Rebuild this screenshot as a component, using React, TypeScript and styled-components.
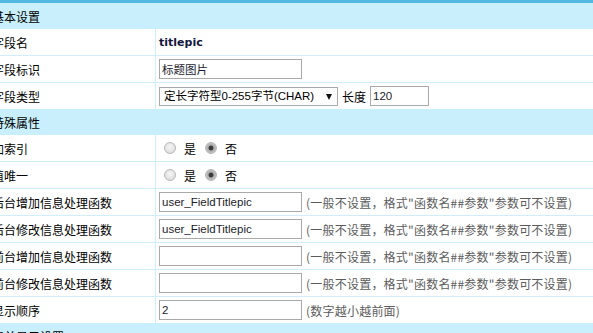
import React from 'react';
import styled, { createGlobalStyle } from 'styled-components';

const GlobalStyle = createGlobalStyle`
  html, body {
    margin: 0;
    padding: 0;
    background: #fff;
    overflow: hidden;
  }
  body {
    font-family: "Noto Sans CJK SC", "Liberation Sans", sans-serif;
    font-size: 12px;
    color: #000;
  }
`;

const Page = styled.div`
  margin-left: -13px;
  border-top: 3px solid #52b7e1;
`;

const SectionHeader = styled.div`
  display: flex;
  align-items: center;
  height: 26px;
  padding-left: 5px;
  background: #c9effc;
`;

const Row = styled.div`
  display: grid;
  grid-template-columns: 169px 1fr;
  height: 26px;

  & + & {
    border-top: 1px solid #cfeefa;
  }
`;

const Label = styled.div`
  display: flex;
  align-items: center;
  padding-left: 5px;
  border-right: 1px solid #cfeefa;
  white-space: nowrap;
`;

const Value = styled.div`
  display: flex;
  align-items: center;
  padding-left: 3px;
  white-space: nowrap;
`;

const FieldName = styled.span`
  font-family: "DejaVu Sans", sans-serif;
  font-size: 11px;
  font-weight: bold;
  color: #16163e;
`;

const TextInput = styled.input<{ $width: number }>`
  box-sizing: border-box;
  width: ${(p) => p.$width}px;
  height: 20px;
  margin: 0;
  padding: 0 2px;
  border: 1px solid #a9a9a9;
  font-family: "Liberation Sans", "Noto Sans CJK SC", sans-serif;
  font-size: 11.5px;
  color: #1c1c2c;
  background: #fff;
  outline: none;
`;

const SelectWrap = styled.span`
  position: relative;
  display: inline-flex;
  width: 179px;
  height: 19px;
`;

const Select = styled.select`
  box-sizing: border-box;
  width: 100%;
  height: 100%;
  margin: 0;
  padding: 0 0 0 4px;
  appearance: none;
  border: 1px solid #a9a9a9;
  border-radius: 0;
  background: #fff;
  font-family: "Liberation Sans", "Noto Sans CJK SC", sans-serif;
  font-size: 11.5px;
  color: #000;
  outline: none;
`;

const Arrow = styled.span`
  position: absolute;
  right: 6px;
  top: 7px;
  width: 0;
  height: 0;
  border-left: 3.5px solid transparent;
  border-right: 3.5px solid transparent;
  border-top: 6px solid #111;
  pointer-events: none;
`;

const Inline = styled.span`
  margin: 0 4px;
`;

const Hint = styled.span`
  margin-left: 4px;
  color: #5c5c5c;
  font-size: 12px;
  letter-spacing: 0.22px;
`;

const Radio = styled.input.attrs({ type: 'radio' })`
  appearance: none;
  box-sizing: border-box;
  width: 12px;
  height: 12px;
  margin: 0 8px 0 5px;
  border: 1px solid #b8b8b8;
  border-radius: 50%;
  background: radial-gradient(circle at 50% 40%, #f6f6f6, #d6d6d6);

  &:checked {
    background: radial-gradient(circle, #3c3c3c 0 2px, #a8a8a8 2.8px, #dcdcdc 100%);
  }
`;

const RadioText = styled.span`
  margin-right: 4px;
`;

const YesNo: React.FC<{ name: string }> = ({ name }) => (
  <>
    <Radio name={name} />
    <RadioText>是</RadioText>
    <Radio name={name} defaultChecked />
    <RadioText>否</RadioText>
  </>
);

const funcHint = '(一般不设置，格式"函数名##参数"参数可不设置)';

const App: React.FC = () => {
  return (
    <>
      <GlobalStyle />
      <Page>
        <SectionHeader>基本设置</SectionHeader>
        <Row>
          <Label>字段名</Label>
          <Value>
            <FieldName>titlepic</FieldName>
          </Value>
        </Row>
        <Row>
          <Label>字段标识</Label>
          <Value>
            <TextInput $width={143} defaultValue="标题图片" />
          </Value>
        </Row>
        <Row>
          <Label>字段类型</Label>
          <Value>
            <SelectWrap>
              <Select defaultValue="CHAR">
                <option value="CHAR">定长字符型0-255字节(CHAR)</option>
              </Select>
              <Arrow />
            </SelectWrap>
            <Inline>长度</Inline>
            <TextInput $width={59} defaultValue="120" />
          </Value>
        </Row>

        <SectionHeader>特殊属性</SectionHeader>
        <Row>
          <Label>加索引</Label>
          <Value>
            <YesNo name="isindex" />
          </Value>
        </Row>
        <Row>
          <Label>值唯一</Label>
          <Value>
            <YesNo name="isonly" />
          </Value>
        </Row>
        <Row>
          <Label>后台增加信息处理函数</Label>
          <Value>
            <TextInput $width={143} defaultValue="user_FieldTitlepic" />
            <Hint>{funcHint}</Hint>
          </Value>
        </Row>
        <Row>
          <Label>后台修改信息处理函数</Label>
          <Value>
            <TextInput $width={143} defaultValue="user_FieldTitlepic" />
            <Hint>{funcHint}</Hint>
          </Value>
        </Row>
        <Row>
          <Label>前台增加信息处理函数</Label>
          <Value>
            <TextInput $width={143} defaultValue="" />
            <Hint>{funcHint}</Hint>
          </Value>
        </Row>
        <Row>
          <Label>前台修改信息处理函数</Label>
          <Value>
            <TextInput $width={143} defaultValue="" />
            <Hint>{funcHint}</Hint>
          </Value>
        </Row>
        <Row>
          <Label>显示顺序</Label>
          <Value>
            <TextInput $width={143} defaultValue="2" />
            <Hint>(数字越小越前面)</Hint>
          </Value>
        </Row>

        <SectionHeader>表单显示设置</SectionHeader>
      </Page>
    </>
  );
};

export default App;
